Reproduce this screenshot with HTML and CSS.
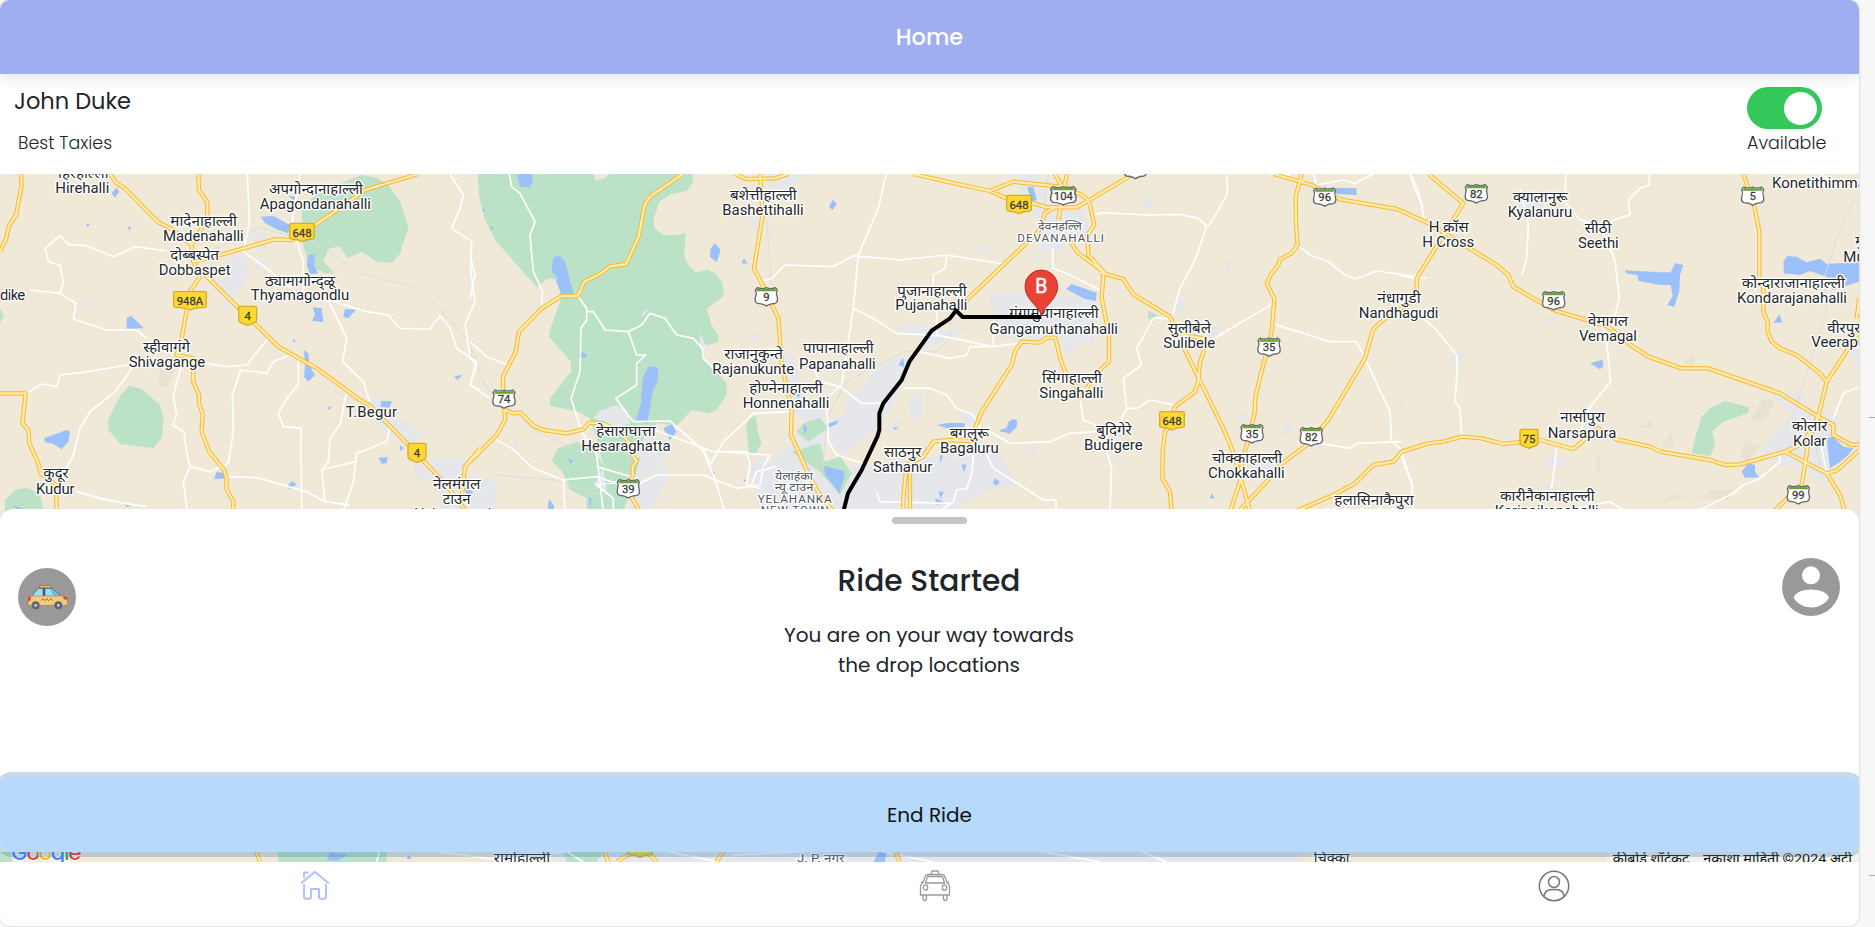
FILE: index.html
```html
<!DOCTYPE html>
<html lang="en">
<head>
<meta charset="utf-8">
<title>Home</title>
<link rel="stylesheet" href="styles.css">
</head>
<body>
<div class="page">
<div class="app">
  <header class="topbar"><h1 class="topbar-title">Home</h1></header>
  <section class="driver">
    <div class="driver-info">
      <div class="driver-name">John Duke</div>
      <div class="driver-company">Best Taxies</div>
    </div>
    <div class="availability">
      <div class="switch"><span class="knob"></span></div>
      <div class="availability-label">Available</div>
    </div>
  </section>
  <main class="stage">
    <svg class="map" viewBox="0 27 5577 2064" preserveAspectRatio="none">
      <defs>
        <g id="nh-s"><path d="M-22-28H22Q27-28 27-23V14Q27 18 22 20L0 29L-22 20Q-27 18-27 14V-23Q-27-28-22-28Z"/></g>
        <g id="nh-m"><path d="M-32-28H32Q37-28 37-23V14Q37 18 32 19Q12 20 0 27Q-12 20-32 19Q-37 18-37 14V-23Q-37-28-32-28Z"/></g>
        <g id="nh-l"><path d="M-44-28H44Q49-28 49-23V14Q49 18 44 19Q16 20 0 27Q-16 20-44 19Q-49 18-49 14V-23Q-49-28-44-28Z"/></g>
        <g id="sh"><path class="sh-body" d="M-26-28Q-13-22 0-28Q13-22 26-28Q31-25 33-20Q28-12 32-2Q37 15 26 19Q9 20 0 27Q-9 20-26 19Q-37 15-32-2Q-28-12-33-20Q-31-25-26-28Z"/><path class="sh-top" d="M-26-26Q-13-20 0-26Q13-20 26-26L30-17H-30Z"/></g>
        <g id="sh-w"><use href="#sh" transform="scale(1.14 1)"/></g>
        <g id="highways">
          <path d="M63 27L65 60L48 150L27 182L18 222L0 260M330 27L350 55L375 70L475 172L520 195L575 240M595 27L597 75L622 112L622 160L575 240L580 290L600 335L570 380L545 520L530 570L580 580L580 650L597 690L597 715L608 748L605 800L628 860L672 915L680 940L679 970L700 1010V1040M660 270L825 223L875 225L945 180L1000 143L1095 75L1255 27M580 290L660 270M600 315L720 433L835 545L950 610L1080 705L1110 722L1225 840L1330 950L1400 1040M1440 850L1395 905L1385 1000M0 685H77L67 775L85 795L88 835L115 895L122 925L168 960L170 1040"/>
          <path transform="translate(1410)" d="M638 27L540 95L524 120L506 215L468 297L420 304L390 327L343 350L323 393H275L215 430L147 500L137 560L99 635V665L105 765L80 810L0 890M105 735L130 745L150 742L190 782L220 795L290 805L340 793L358 773L400 775L450 800L492 850L490 875L500 888L488 905V930L475 980L510 1040M870 27L878 150L852 310L890 385L925 460L935 600L965 730L963 810L1010 915L1040 975L1090 1040M795 27L828 42L915 40L955 27M1330 27L1440 52L1560 78L1630 50L1740 62L1800 68M1560 78L1620 105L1690 115L1730 127H1820L1850 110L1990 27M1755 27L1790 90M1792 27L1780 70L1765 165M1790 80Q1845 80 1860 120L1873 180L1852 210L1855 270L1905 325M1758 125L1725 145L1705 200L1600 300L1495 400L1460 440M1790 210L1820 260L1905 325M1300 1040V1000L1310 900L1360 875L1390 830L1440 825L1500 828L1515 790L1535 740L1545 725L1625 600L1635 560L1655 530L1708 533L1730 518H1755L1763 545L1770 580L1785 620L1820 665L1830 705M1900 325L1895 400L1917 510V590L1890 615L1850 670M1320 910V1040"/>
          <path transform="translate(2820)" d="M480 322L550 342L580 388L690 455L725 535L850 790L875 850L905 950L930 1040M725 510L790 520V565L780 590L775 650L765 680L705 725L690 780L675 800L668 860L667 940L690 980L695 1040M1000 27L1115 60L1200 103L1370 132L1460 172L1670 300L1705 330L1720 365L1840 435L2004 485L2065 535L2125 575L2225 610H2305L2520 685L2635 755M1085 27L1067 95L1068 180L1073 240L1055 265L1020 283L1015 300L993 328L980 355L1003 400L995 500L947 690L943 750L920 840L905 900L900 950L870 1040M1465 27L1570 115L1430 340V400L1330 465L1300 492L1275 580L1165 765L1100 840L1020 900L980 950L895 1040M1065 1040L1180 990L1245 955L1300 900L1360 890L1385 860L1465 835L1510 830L1565 815L1625 820L1690 837L1800 825L1900 852L1975 790L2030 823L2130 845L2160 860L2310 885L2355 900L2400 898L2535 860L2590 835L2635 755"/>
          <path transform="translate(4200)" d="M1030 27L1060 110L1078 200V340L1090 370V440L1103 470V500L1115 530L1140 550L1190 570L1260 625L1280 650L1378 500M1280 650L1255 755L1225 830L1215 900L1205 960L1120 1040M1378 400L1370 460M1255 755L1300 780V810L1355 840L1378 838M1155 860L1280 925L1310 917L1378 855M1280 925L1320 990L1335 1040"/>
        </g>
      </defs>
      <rect class="land" y="27" width="5577" height="2064"/>
      <g class="hills"><path d="M480 610L525 615L500 668L472 660Z"/><path transform="translate(4200)" d="M885 560L880 600L850 598ZM755 765L762 790L715 788ZM815 800L820 850L785 845ZM600 865L598 935L585 890ZM1090 700L1125 708L1095 770L1050 765ZM1040 830L1080 840L1045 890L1020 870ZM930 975L1000 973L985 1005L900 1000ZM820 985L850 1000L780 1010Z"/></g>
      <g class="urban">
        <path d="M755 195L795 210L800 245L770 260ZM680 290L730 260L745 320L725 370L690 350ZM760 320L775 280L810 290ZM640 340L720 350L700 430L665 435L680 390ZM220 420L270 400L260 425ZM1110 395L1125 397L1108 430ZM1110 710L1150 690L1180 760L1275 800L1220 850L1125 775ZM1240 900L1320 880L1400 880V1040H1330L1305 940L1250 945ZM20 27H60L50 48Z"/>
        <path transform="translate(1410)" d="M900 27L1010 30L950 75L880 65ZM830 155L890 160L870 205ZM925 565L970 570L990 650L1010 700L1065 700V760L1000 770L965 740ZM1180 670L1200 630L1290 570L1340 570L1300 660L1240 770L1120 870L1080 830L1075 770L1120 750L1140 700ZM980 800L1060 810L1060 860L980 840ZM1310 700L1355 680V750L1330 770ZM1250 780L1290 765L1290 790L1250 800ZM370 760L380 740L440 720L470 740L520 800L600 830L550 920L490 970L430 1000L400 920L450 890L440 830ZM900 900L960 830L1060 930L1160 900L1440 870L1535 830L1610 940L1440 1040H860L865 980L830 900L880 870ZM1350 560L1440 520L1500 480L1430 500L1360 480L1280 480L1290 500L1350 510ZM215 410L240 420L220 430ZM540 425L515 460L520 440ZM690 505L710 545L690 550ZM855 508L870 510L850 535L835 515ZM330 835L400 840L430 875L380 880ZM0 930L75 950L80 1040H0ZM130 825L155 835L135 865Z"/>
        <path transform="translate(2820)" d="M145 385L310 380L470 405L460 535L180 515ZM285 140L430 120L450 210L330 270L300 250ZM285 265L305 280L275 300ZM345 540L420 535L395 570ZM625 80L642 125L610 135ZM865 290L870 300L860 335L848 288ZM240 27H300L330 120L320 180L280 150L240 80ZM105 245L165 245L135 272ZM720 395L740 403L730 440L695 438ZM800 500L855 475L825 525ZM510 655L520 690L495 680ZM1040 770L1062 793L1020 812ZM890 740L930 755L900 768ZM1200 720L1225 730L1208 743ZM940 890H1010V935L930 930ZM265 840L295 845L280 878ZM60 740L120 750L115 790L80 780ZM80 870L180 870L240 970H150ZM670 790L717 800L680 820ZM520 870L555 890L540 900Z"/>
        <path transform="translate(4200)" d="M1110 690L1200 680L1240 740L1330 760L1300 800V880L1270 960L1215 905L1140 900L1080 860L1130 800L1180 750ZM170 550L190 555L195 580L140 605ZM430 465L480 450L450 475ZM705 712L748 718L730 733ZM440 870L500 885L485 905L440 910ZM430 970L450 950L480 970ZM1335 565L1378 545V590ZM350 100H430V145L360 140ZM1085 222L1105 230L1085 240ZM40 95L70 90L60 115ZM540 780L600 765L580 800ZM0 695L15 730H0Z"/>
        <path d="M1665 2055H3900V2091H1665Z"/>
      </g>
      <g class="park">
        <path d="M905 135L935 100L1010 60L1085 30L1130 38L1165 60L1200 110L1226 188L1205 245L1202 265L1175 293L1130 290L1085 260L1043 280L1018 243L985 252L970 290L1003 325H975L925 300L910 240ZM387 662L425 672L480 720L491 768L485 820L460 849L362 838L325 795L324 765L362 690ZM15 1005L45 975L80 968L120 985L130 1040H15ZM0 430L12 450L0 475Z"/>
        <path transform="translate(1410)" d="M23 27H370L375 45L400 42L418 27H668V55L650 78L602 88L568 110L552 160V188L580 210H620L648 203L642 270L655 300L678 323L712 315L735 325L758 355L762 392L710 432L725 480L747 515L745 532L695 545L700 580L770 655L770 690L740 735L714 745L665 735L620 782L560 775L480 870L520 850L490 950L460 1040H350V1000L300 975L280 925L245 885L265 850L320 830L370 855L400 900L380 820L360 760L325 740L240 722L240 700L303 620V590L237 515L240 495L272 405L265 345L235 340L200 366L150 310L75 225L45 165L28 95ZM858 752L863 800L875 835L855 870H838L828 780L840 760ZM1000 775L1050 758L1075 790L1015 830L980 800ZM965 860L1050 835L1065 890L1110 875L1145 925L1110 990L1050 920Z"/>
        <path transform="translate(2820)" d="M625 437L655 450L625 464Z"/>
        <path transform="translate(4200)" d="M930 730L975 708L1047 727L1043 745L970 770L937 798L945 840L930 872L875 865L885 820L905 755Z"/>
        <path d="M0 2040H50L35 2091H0ZM835 2055H1160V2091H835ZM1690 2055H1810L1790 2091H1700Z"/>
      </g>
      <g class="urban"><path transform="translate(1410)" d="M370 760L390 738L440 720L470 735L480 775L430 790L400 770ZM540 425L515 460L520 440ZM690 505L710 545L690 550ZM480 880L560 830L600 850L550 930L490 975L470 1040H540L600 930L560 870ZM370 960L400 910L410 980Z"/></g>
      <g class="water">
        <path d="M335 85L350 68L358 80L345 98ZM865 92L885 95L882 108ZM782 155L820 153L870 180L865 205L835 195L795 175ZM925 270L945 268L942 300L955 325L930 328L920 300ZM258 175L270 178L262 186ZM382 188L393 184L390 198ZM380 460L393 452L432 490L380 491ZM938 427L965 430L970 472L936 467L945 448ZM1035 432L1068 434L1045 460L1030 455ZM912 555L925 565L928 600L945 630L925 650L912 635L915 600ZM882 520L887 530L878 530ZM1145 708L1176 709L1168 728L1140 725ZM132 820L200 795L210 800L205 830L185 853L155 835L135 832ZM1362 635L1390 628L1372 644ZM980 730L993 722L990 734ZM1200 840L1212 850L1200 858ZM1135 878L1163 877L1160 895L1145 896ZM650 920L672 925L675 940L642 943ZM875 948L890 958L870 972L861 965ZM375 1018L393 1022L380 1026ZM40 1022L65 1028L60 1040ZM1395 970L1420 980L1400 1000Z"/>
        <path transform="translate(1410)" d="M138 32L150 27H187L188 50L177 68L150 65L145 40ZM35 138L42 130L48 140ZM60 190L68 183V198ZM248 285Q253 268 273 275L285 290L312 390L275 388L258 350L262 340L245 320ZM330 557L353 570L342 580L325 575ZM535 605Q555 600 566 612L562 650L548 680L532 776L498 766L512 720L518 640ZM722 250L735 235L752 255L740 292L720 275ZM822 279L833 296L815 295ZM1088 104L1101 117L1087 136L1077 125ZM1300 578L1303 605L1285 600ZM975 685L995 680L985 700ZM1078 775L1107 765L1100 778L1065 793ZM1000 775L1013 792L1002 808ZM1062 903L1123 918V935L1108 985L1090 960L1065 930ZM883 900L887 915L875 908ZM725 918L735 922L728 930ZM580 790L605 778L620 800L600 825ZM295 880L310 887L300 897ZM237 1003L252 1020V1040H232ZM357 997L365 1000L360 1040ZM820 942L830 945L823 951ZM1268 785L1285 790L1275 796ZM1400 780L1440 773L1485 775V785L1430 790ZM1405 978L1422 983L1410 992ZM1395 1000L1420 1010L1400 1020Z"/>
        <path transform="translate(2820)" d="M262 67L280 65L290 105L275 110ZM395 357L470 383L468 408L435 402L378 372ZM1170 68L1250 70V90L1190 87ZM220 762L232 768L230 785L210 806L175 797L200 788L205 770ZM65 900L80 897L72 922ZM165 940L180 950L170 962L158 955ZM0 870L10 872L0 895ZM0 985L12 978L0 1005ZM815 985L825 1000L810 1000Z"/>
        <path transform="translate(4200)" d="M675 316L780 322H812L825 295L850 300L840 330L838 378L823 425L802 421L818 393L812 360H780L715 348L712 330L678 325ZM1150 290L1162 273L1190 275L1220 292L1260 281L1280 297L1378 290V350L1300 375L1280 335L1230 318L1200 330L1152 325ZM1138 448L1147 472L1120 474ZM570 595L608 584L610 605L598 612ZM1280 820L1300 815L1330 845L1360 850L1345 870L1315 895L1290 910ZM1025 920L1045 895L1065 900V920L1078 937L1035 938Z"/>
        <path d="M990 2060L1010 2066L1045 2070L1010 2088L980 2085ZM1227 2070L1235 2082H1219ZM2640 2055H2660L2655 2091H2620Z"/>
      </g>
      <g class="rail">
        <path d="M650 250L780 188L950 235L1080 325L1260 370L1400 520L1440 610M375 70L520 200M1090 715L1000 680"/>
        <path transform="translate(1410)" d="M890 165L905 360M0 560L50 670L200 800L330 860L400 900M80 930L250 945L400 990M1060 890L1070 760L1130 650L1300 560L1400 560L1440 520V470M1735 27L1720 140"/>
        <path transform="translate(4200)" d="M1378 110H1360L1310 220L1275 330L1280 440L1180 750M1235 800L1265 920"/>
      </g>
      <g class="minor">
        <path d="M80 685L125 657L170 665L180 630L250 622L380 600L480 590M140 265L135 250L180 212L205 238L260 242L340 275L405 245L500 258M140 265L145 290L180 300L190 350L180 385L90 375M180 385L228 415L220 462L320 495H410L440 520M400 605L345 680L270 740L240 790L220 870L185 935M545 600L520 690L530 750L518 780L552 800L558 850L570 905L550 950L562 1040M570 905L630 920L685 895L700 800L697 690L722 615L800 625L820 590L870 570L895 585V660L860 700L835 745L850 785L903 790L905 1040M620 595L680 605L740 600L805 520M742 27L748 170L730 260L800 310L910 400M900 27L875 180L910 290V380L985 405L1040 520L1028 590L1090 650L1108 710M985 405L1100 440L1165 450L1200 490L1290 492L1320 452L1350 490L1370 550L1430 590L1410 660L1440 675M1350 27L1390 90L1380 130L1355 190L1415 230L1412 320L1425 410L1395 480L1410 570M1040 680L1020 780L990 820L985 890L965 915L975 1010M1170 780L1160 830L1070 865L1060 950L1030 1040M965 915L1065 890M685 935L770 938L920 980L975 1010L1050 1020M230 980L300 1000L375 1015L440 1025"/>
        <path transform="translate(1410)" d="M118 27L125 65L150 85L195 170L180 210L190 320L218 380L215 425M323 393L350 430V465L333 490L330 620L303 700L335 800L380 870L400 1040M350 440H370L405 495L475 500L500 570L527 570L500 595L500 660L437 700L490 770L600 768L660 820L700 860L730 930L765 1040M475 500L515 480L540 445L585 460L620 510L670 520L697 550L700 580L730 610M0 530L50 575L115 600M0 580L20 600L0 660L60 700M70 820L125 850L190 910L280 945L380 935L480 970L560 930L700 930L800 970L870 960L880 905L900 870L750 860M540 790L730 860H830L840 900L830 960L870 970M380 905L500 940L380 960L430 1000V1040M280 945L285 1040M1248 27L1225 130L1165 270L1150 430L1115 660L1070 700L1075 830L1100 870L1180 895M870 350L905 340L945 300L1090 305L1150 272L1290 285L1430 270L1600 297M1150 430L1210 460L1280 505L1410 512L1570 545L1680 530M1025 600L1050 650L1110 665L1175 715H1230M960 740L850 745L815 780L760 830L720 900L700 850M1350 560L1440 580L1490 570L1500 545H1570V510M1300 670H1380L1430 690L1460 730L1510 750L1535 800M915 905L860 920L840 970M935 970L1025 950M0 270L15 330L0 400M1400 430V510M1430 270L1425 310L1390 330V370M1220 980L1230 1010L1440 1015"/>
        <path transform="translate(2820)" d="M338 250V310L390 330L490 380M450 150L490 143L620 150L720 148L775 160L800 185L815 170L863 85L860 27M800 185L765 285L720 370L695 460L640 460L590 550L605 600L550 640L560 730L540 770L490 790L430 765L420 700M560 730H590L630 705L710 722M805 530L1000 415M995 475L1170 530L1250 530L1275 580L1350 740L1355 830L1380 850L1415 950L1420 1040M1385 830L1250 835L1230 850L1110 830M150 800L210 835L330 830L390 805L470 800M100 870L95 930L80 970L50 975L40 1010L0 1040M140 870L160 910L240 960L310 1005H348V1040M500 860L515 910L510 1040M1073 240L1110 270L1165 290L1215 330L1245 342L1310 318L1430 335L1460 340M1120 27L1130 60L1210 45L1245 55L1300 27M990 27L1050 30M1410 27L1420 60L1450 130M1450 460L1485 490L1550 570V640L1545 710L1560 730L1565 815M1380 850L1390 890L1420 970"/>
        <path transform="translate(4200)" d="M32 27L55 80L75 170M497 27L495 110L540 165L600 180L630 250L645 290L658 400L640 470L620 530L632 650L570 725L535 810M748 27V60L720 70L685 105L690 150L640 165L610 200M360 70L385 180L380 280L365 330M0 332L50 340M470 850L455 970M1140 865V890L1080 940L1030 960L1000 985L900 1035M1300 760L1330 685L1378 665M1260 830L1280 920M470 1040L630 1010L680 1040M1260 27L1300 50"/>
        <path d="M1140 2050L1130 2091M1280 2055L1500 2085L1700 2060L1750 2091M1980 2055L2150 2090M2200 2070L2600 2050L2800 2091M3100 2055L3300 2091M3400 2050L3500 2091"/>
      </g>
      <g class="highway-edge"><use href="#highways"/><path d="M765 2050L780 2091M1810 2050L1825 2091M1850 2091Q1930 2030 1970 2091M2175 2050L2150 2091M2680 2050L2700 2091M4970 2050L4980 2091"/></g>
      <g class="highway-core"><use href="#highways"/><path d="M765 2050L780 2091M1810 2050L1825 2091M1850 2091Q1930 2030 1970 2091M2175 2050L2150 2091M2680 2050L2700 2091M4970 2050L4980 2091"/></g>
      <g class="labels">
        <text x="250" y="38" textLength="152" lengthAdjust="spacingAndGlyphs">हिरेहाल्ली</text><text x="247" y="84" textLength="162">Hirehalli</text>
        <text x="948" y="88" textLength="282" lengthAdjust="spacingAndGlyphs">अपगोन्दानाहाल्ली</text><text x="946" y="133" textLength="334">Apagondanahalli</text>
        <text x="611" y="183" textLength="200" lengthAdjust="spacingAndGlyphs">मादेनाहाल्ली</text><text x="610" y="228" textLength="242">Madenahalli</text>
        <text x="584" y="286" textLength="146" lengthAdjust="spacingAndGlyphs">दोब्बस्पेत</text><text x="584" y="330" textLength="216">Dobbaspet</text>
        <text x="900" y="362" textLength="210" lengthAdjust="spacingAndGlyphs">ठ्यामागोन्द्ळू</text><text x="900" y="406" textLength="295">Thyamagondlu</text>
        <text x="500" y="560" textLength="140" lengthAdjust="spacingAndGlyphs">स्हीवागंगे</text><text x="501" y="605" textLength="230">Shivagange</text>
        <text x="38" y="404" textLength="76">dike</text><text x="1114" y="757" textLength="154">T.Begur</text>
        <text x="168" y="940" textLength="76" lengthAdjust="spacingAndGlyphs">कुदूर</text><text x="166" y="986" textLength="116">Kudur</text>
        <text x="1370" y="973" textLength="142" lengthAdjust="spacingAndGlyphs">नेलमंगल</text><text x="1370" y="1018" textLength="84" lengthAdjust="spacingAndGlyphs">टाउन</text><text x="1370" y="1062" textLength="256">Nelamangala</text>
        <g transform="translate(1410)">
          <text x="880" y="105" textLength="200" lengthAdjust="spacingAndGlyphs">बशेत्तीहाल्ली</text><text x="879" y="149" textLength="244">Bashettihalli</text>
          <text x="1386" y="392" textLength="208" lengthAdjust="spacingAndGlyphs">पुजानाहाल्ली</text><text x="1384" y="436" textLength="216">Pujanahalli</text>
          <text x="851" y="583" textLength="176" lengthAdjust="spacingAndGlyphs">राजानुकुन्ते</text><text x="850" y="627" textLength="246">Rajanukunte</text>
          <text x="1105" y="565" textLength="212" lengthAdjust="spacingAndGlyphs">पापानाहाल्ली</text><text x="1102" y="611" textLength="230">Papanahalli</text>
          <text x="948" y="685" textLength="220" lengthAdjust="spacingAndGlyphs">होण्नेनाहाल्ली</text><text x="948" y="729" textLength="260">Honnenahalli</text>
          <text x="468" y="812" textLength="178" lengthAdjust="spacingAndGlyphs">हेसाराघात्ता</text><text x="468" y="857" textLength="268">Hesaraghatta</text>
          <text x="1298" y="877" textLength="112" lengthAdjust="spacingAndGlyphs">साठनुर</text><text x="1298" y="922" textLength="178">Sathanur</text>
          <g class="town"><text x="972" y="945" textLength="114" lengthAdjust="spacingAndGlyphs">येलाहंका</text><text x="972" y="978" textLength="116" lengthAdjust="spacingAndGlyphs">न्यू टाउन</text><text x="974" y="1013" textLength="222">YELAHANKA</text><text x="974" y="1047" textLength="204">NEW TOWN</text></g>
        </g>
        <g transform="translate(2820)">
          <g class="town"><text x="360" y="196" textLength="132" lengthAdjust="spacingAndGlyphs">देवनहल्लि</text><text x="362" y="231" textLength="260">DEVANAHALLI</text></g>
          <text x="342" y="460" textLength="268" lengthAdjust="spacingAndGlyphs">गंगामुथानाहाल्ली</text><text x="341" y="506" textLength="386">Gangamuthanahalli</text>
          <text x="396" y="655" textLength="180" lengthAdjust="spacingAndGlyphs">सिंगाहाल्ली</text><text x="394" y="700" textLength="192">Singahalli</text>
          <text x="748" y="503" textLength="130" lengthAdjust="spacingAndGlyphs">सुलीबेले</text><text x="748" y="549" textLength="156">Sulibele</text>
          <text x="522" y="811" textLength="106" lengthAdjust="spacingAndGlyphs">बुदिगेरे</text><text x="520" y="855" textLength="176">Budigere</text>
          <text x="88" y="820" textLength="118" lengthAdjust="spacingAndGlyphs">बगलुरू</text><text x="88" y="864" textLength="176">Bagaluru</text>
          <text x="921" y="893" textLength="212" lengthAdjust="spacingAndGlyphs">चोक्काहाल्ली</text><text x="919" y="938" textLength="230">Chokkahalli</text>
          <text x="1377" y="413" textLength="130" lengthAdjust="spacingAndGlyphs">नंधागुडी</text><text x="1376" y="459" textLength="239">Nandhagudi</text>
          <text x="1302" y="1020" textLength="238" lengthAdjust="spacingAndGlyphs">हलासिनाकैपुरा</text><text x="1302" y="1064" textLength="290">Halasinakaipura</text>
        </g>
        <g transform="translate(4200)">
          <text x="146" y="202" textLength="120" lengthAdjust="spacingAndGlyphs">H क्रॉस</text><text x="145" y="247" textLength="156">H Cross</text>
          <text x="421" y="111" textLength="164" lengthAdjust="spacingAndGlyphs">क्यालानुरू</text><text x="420" y="157" textLength="194">Kyalanuru</text>
          <text x="594" y="205" textLength="80" lengthAdjust="spacingAndGlyphs">सीठी</text><text x="595" y="250" textLength="122">Seethi</text>
          <text class="start" x="1116" y="68">Konetithimmanahalli</text>
          <text class="start" x="1366" y="242">मुदुवाडी</text><text class="start" x="1330" y="290">Muduvadi</text>
          <text x="1180" y="370" textLength="310" lengthAdjust="spacingAndGlyphs">कोन्दाराजानाहाल्ली</text><text x="1176" y="415" textLength="330">Kondarajanahalli</text>
          <text class="start" x="1282" y="503">वीरपुरा</text><text class="start" x="1234" y="547">Veerapura</text>
          <text x="624" y="483" textLength="120" lengthAdjust="spacingAndGlyphs">वेमागल</text><text x="624" y="529" textLength="174">Vemagal</text>
          <text x="548" y="772" textLength="134" lengthAdjust="spacingAndGlyphs">नार्सापुरा</text><text x="546" y="818" textLength="206">Narsapura</text>
          <text x="1229" y="798" textLength="106" lengthAdjust="spacingAndGlyphs">कोलार</text><text x="1229" y="844" textLength="100">Kolar</text>
          <text x="442" y="1008" textLength="284" lengthAdjust="spacingAndGlyphs">कारीनैकानाहाल्ली</text><text x="440" y="1052" textLength="312">Karinaikanahalli</text>
        </g>
        <text x="1566" y="2093" textLength="170" lengthAdjust="spacingAndGlyphs">रामोहाल्ली</text>
        <g class="town"><text x="2462" y="2091" textLength="142" lengthAdjust="spacingAndGlyphs">J. P. नगर</text></g>
        <text x="3995" y="2095" textLength="108" lengthAdjust="spacingAndGlyphs">चिक्का</text>
      </g>
      <g class="nh">
        <use href="#nh-m" x="906" y="203"/><use href="#nh-l" x="570" y="408"/><use href="#nh-s" x="743" y="452"/><use href="#nh-s" x="1251" y="863"/><use href="#nh-m" x="3057" y="119"/><use href="#nh-m" x="3516" y="768"/><use href="#nh-s" x="4587" y="821"/><use href="#nh-m" x="1920" y="2050"/>
      </g>
      <g class="sh">
        <use href="#sh" x="2299" y="396"/><use href="#sh" x="1512" y="703"/><use href="#sh" x="1885" y="972"/><use href="#sh-w" x="3190" y="93"/><use href="#sh" x="3974" y="97"/><use href="#sh" x="3807" y="547"/><use href="#sh" x="3756" y="807"/><use href="#sh" x="3934" y="816"/><use href="#sh" x="3406" y="14"/><use href="#sh" x="4429" y="87"/><use href="#sh" x="4661" y="408"/><use href="#sh" x="5258" y="94"/><use href="#sh" x="5395" y="990"/>
      </g>
      <g class="numbers">
        <text x="906" y="215">648</text><text x="570" y="420">948A</text><text x="743" y="464">4</text><text x="1251" y="875">4</text><text x="3057" y="131">648</text><text x="3516" y="780">648</text><text x="4587" y="833">75</text>
        <text x="2299" y="408">9</text><text x="1512" y="714">74</text><text x="1885" y="983">39</text><text x="3190" y="104">104</text><text x="3974" y="108">96</text><text x="3807" y="559">35</text><text x="3756" y="818">35</text><text x="3934" y="828">82</text><text x="4429" y="99">82</text><text x="4661" y="419">96</text><text x="5258" y="105">5</text><text x="5395" y="1001">99</text>
      </g>
      <path class="route" d="M2530 1040L2544 985L2585 915L2632 815L2638 795V745L2650 715L2705 645L2728 590L2795 497L2850 460L2868 436L2888 456H3124"/>
      <path class="pin" d="M3124 452C3120 425 3075 405 3075 364A49 49 0 0 1 3173 364C3173 405 3128 425 3124 452Z"/>
      <text class="pin-letter" x="3124" y="383">B</text>
      <rect class="credit-bg" x="4821" y="2049" width="756" height="42"/>
      <text class="credit" x="4838" y="2094" textLength="230" lengthAdjust="spacingAndGlyphs">कीबोर्ड शॉर्टकट</text><text class="credit" x="5110" y="2094" textLength="446" lengthAdjust="spacingAndGlyphs">नकाशा माहिती ©2024 अटी</text>
      <text class="google" x="34" y="2084" textLength="210"><tspan fill="#4285f4">G</tspan><tspan fill="#ea4335">o</tspan><tspan fill="#fbbc04">o</tspan><tspan fill="#4285f4">g</tspan><tspan fill="#34a853">l</tspan><tspan fill="#ea4335">e</tspan></text>
    </svg>
    <section class="sheet">
      <div class="handle"></div>
      <div class="ride">
        <svg class="avatar taxi-avatar" viewBox="54 204 174 174">
          <circle cx="141" cy="291" r="87" fill="#999"/>
          <path d="M119 256H152V264H119Z" fill="#e8b65c" stroke="#8a7148" stroke-width="2"/>
          <path d="M94 290L114 265H156L184 290Z" fill="#9edcf5" stroke="#646d7c" stroke-width="3"/>
          <path d="M149 267H156L178 289H162Z" fill="#62bde6"/>
          <path d="M132 264V289" stroke="#4f5c6d" stroke-width="8"/>
          <path d="M84 316V295Q86 288 98 288H186Q201 290 202 303V316Z" fill="#f6ca7c" stroke="#a6854f" stroke-width="2"/>
          <path d="M84 290H92V300L84 305ZM190 289Q202 290 203 297Q195 302 190 295Z" fill="#d9413f"/>
          <path d="M123 302L129 296L134 302L140 296L146 302L152 296L158 302" fill="none" stroke="#887247" stroke-width="3"/>
          <g fill="#ddd" stroke="#5e6775" stroke-width="8"><circle cx="107" cy="316" r="8"/><circle cx="175" cy="316" r="8"/></g>
        </svg>
        <div class="ride-text">
          <h2 class="ride-title">Ride Started</h2>
          <p class="ride-note">You are on your way towards<br>the drop locations</p>
        </div>
        <svg class="avatar" viewBox="0 0 174 174"><circle cx="87" cy="87" r="87" fill="#999"/><circle cx="87" cy="52" r="27" fill="#fff"/><path d="M35 120C42 86 132 86 141 120C116 158 60 158 35 120Z" fill="#fff"/></svg>
      </div>
      <button class="end-ride"><span>End Ride</span></button>
    </section>
  </main>
  <nav class="tabs">
    <svg class="tab-icon home-icon" viewBox="0 0 32 32"><path d="M2 13.500L15.800 1.800L30 13.500M5 8V2.500H9.500M5 14V27Q5 28.700 7 28.700H10.500Q12 28.700 12 27.200V19H20V27.200Q20 28.700 21.500 28.700H25Q27 28.700 27 27V14"/></svg>
    <svg class="tab-icon taxi-icon" viewBox="0 0 32 32"><path d="M12.500 4V2Q12.500 1 13.500 1H18.500Q19.500 1 19.500 2V4M9 4.500H23Q25 4.500 26 7L28 12.500Q30.500 14 30.500 17V25H1.500V17Q1.500 14 4 12.500L6 7Q7 4.500 9 4.500ZM9.500 6.500H22.500Q23.500 6.500 24 8L25.500 13H6.500L8 8Q8.500 6.500 9.500 6.500ZM4 25V28.500Q4 30.500 5.500 30.500Q7.500 30.500 7.500 28.500V25M24.500 25V28.500Q24.500 30.500 26.500 30.500Q28 30.500 28 28.500V25M2 12L4 12.500M30 12L28 12.500"/><ellipse cx="6.500" cy="17.500" rx="2.200" ry="2.700"/><ellipse cx="25.500" cy="17.500" rx="2.200" ry="2.700"/></svg>
    <svg class="tab-icon user-icon" viewBox="0 0 32 32"><circle cx="16" cy="16" r="14.700"/><circle cx="16" cy="12" r="5.500"/><path d="M6 26C7 20 11 19.500 16 19.500S25 20 26 26"/></svg>
  </nav>
</div>
<aside class="gutter"><span class="tick"></span><span class="tick"></span></aside>
</div>
</body>
</html>
```
FILE: styles.css
```css
* { box-sizing: border-box; }
body { margin: 0; background: #f7f7f7; color: #212529; font-family: Poppins, Inter, "Noto Sans", sans-serif; overflow: hidden; }
h1, h2, p { margin: 0; font-weight: 400; }
.page { display: flex; height: 927px; }
.app { width: 1859px; height: 926px; display: flex; flex-direction: column; background: #fff; border-radius: 10px; overflow: hidden; box-shadow: 0 0 2px rgba(0,0,0,.3); flex: none; }
.topbar { height: 74px; flex: none; display: flex; justify-content: center; align-items: center; background: #9faef1; box-shadow: 0 4px 14px rgba(0,0,0,.1); padding-bottom: 1px; z-index: 1; }
.topbar-title { color: #fff; font-size: 22.5px; line-height: 30px; font-weight: 500; }
.driver { height: 100px; flex: none; display: flex; justify-content: space-between; padding: 13px 32px 0 14px; background: #fff; }
.driver-name { font-size: 22.5px; line-height: 28px; }
.driver-company { font-size: 17.5px; line-height: 24px; font-weight: 300; padding: 16px 0 0 4px; }
.availability { width: 80px; }
.switch { width: 75px; height: 42px; border-radius: 21px; background: #34c759; display: flex; justify-content: flex-end; align-items: center; padding-right: 5px; }
.knob { width: 33px; height: 33px; border-radius: 50%; background: #fff; }
.availability-label { font-size: 17.5px; line-height: 24px; margin-top: 2px; font-weight: 300; }
.stage { height: 688px; flex: none; display: grid; }
.map, .sheet { grid-area: 1 / 1; }
.map { width: 1859px; height: 688px; display: block; }
.land { fill: #f0e9d8; }
.hills { fill: #e9e2d1; }
.urban { fill: #e5e7eb; }
.park { fill: #bbe2c6; }
.water { fill: #9cc0f9; }
.rail, .minor, .highway-edge, .highway-core, .route { fill: none; stroke-linejoin: round; }
.rail { stroke: #d9dce2; stroke-width: 3; }
.minor { stroke: #fff; stroke-width: 5; }
.highway-edge { stroke: #fab927; stroke-width: 13; }
.highway-core { stroke: #ffebb0; stroke-width: 7; }
.labels { font: 45px Roboto, "Noto Sans", sans-serif; fill: #24272b; stroke: #fff; stroke-width: 8; stroke-linejoin: round; paint-order: stroke; text-anchor: middle; }
.labels .start { text-anchor: start; }
.labels .town { font-size: 35px; fill: #50565e; }
.nh { fill: #fdd835; stroke: #d8ad24; stroke-width: 4; stroke-linejoin: round; }
.sh-body { fill: #fff; stroke: #626870; stroke-width: 4; }
.sh-top { fill: #689f38; }
.numbers { font: 400 34px Roboto, sans-serif; fill: #3b3b36; stroke: #3b3b36; stroke-width: .8; text-anchor: middle; }
.route { stroke: #000; stroke-width: 12; }
.pin { fill: #ea4335; stroke: #c5221f; stroke-width: 3; }
.pin-letter { font: 400 58px Roboto, sans-serif; fill: #fff; stroke: #fff; stroke-width: 1.5; text-anchor: middle; }
.credit-bg { fill: #f5f5f5; opacity: .7; }
.credit { font: 38px Roboto, "Noto Sans", sans-serif; fill: #111; }
.google { font: 500 64px Poppins, Inter, sans-serif; stroke: #fff; stroke-width: 7; paint-order: stroke; }
.sheet { margin: 335px 0 10px; background: #fff; border-radius: 14px 14px 0 0; display: flex; flex-direction: column; }
.handle { width: 75px; height: 7px; border-radius: 4px; background: #c4c4c4; margin: 8px auto 0; flex: none; }
.ride { flex: 1; display: flex; justify-content: space-between; align-items: flex-start; padding: 34px 19px 0 18px; }
.avatar { width: 58px; height: 58px; display: block; }
.taxi-avatar { margin-top: 10px; }
.ride-text { text-align: center; padding-top: 4px; }
.ride-title { font-size: 29.7px; line-height: 38px; font-weight: 500; }
.ride-note { font-size: 20px; line-height: 30px; margin-top: 20px; }
.end-ride { height: 75px; flex: none; width: 1859px; border: 0; border-radius: 12px; background: #b7dafc; box-shadow: 0 0 0 5px rgba(52,120,175,.28); font: 400 20px Poppins, Inter, sans-serif; color: #111; padding: 1px 0 0; }
.tabs { height: 64px; flex: none; display: grid; grid-template-columns: 630px 609px 630px; justify-content: center; background: #fff; z-index: 1; padding: 8px 0 0 10px; justify-items: center; }
.tab-icon { width: 32px; height: 32px; fill: none; stroke: #999; stroke-width: 1.3; }
.home-icon { stroke: #b0bfff; stroke-width: 1.9; stroke-linejoin: round; }
.user-icon { stroke: #777; stroke-width: 1.5; }
.gutter { flex: 1; display: flex; flex-direction: column; align-items: flex-end; padding-top: 417px; gap: 457px; }
.tick { width: 6px; height: 1px; background: #aaa; flex: none; }
```
